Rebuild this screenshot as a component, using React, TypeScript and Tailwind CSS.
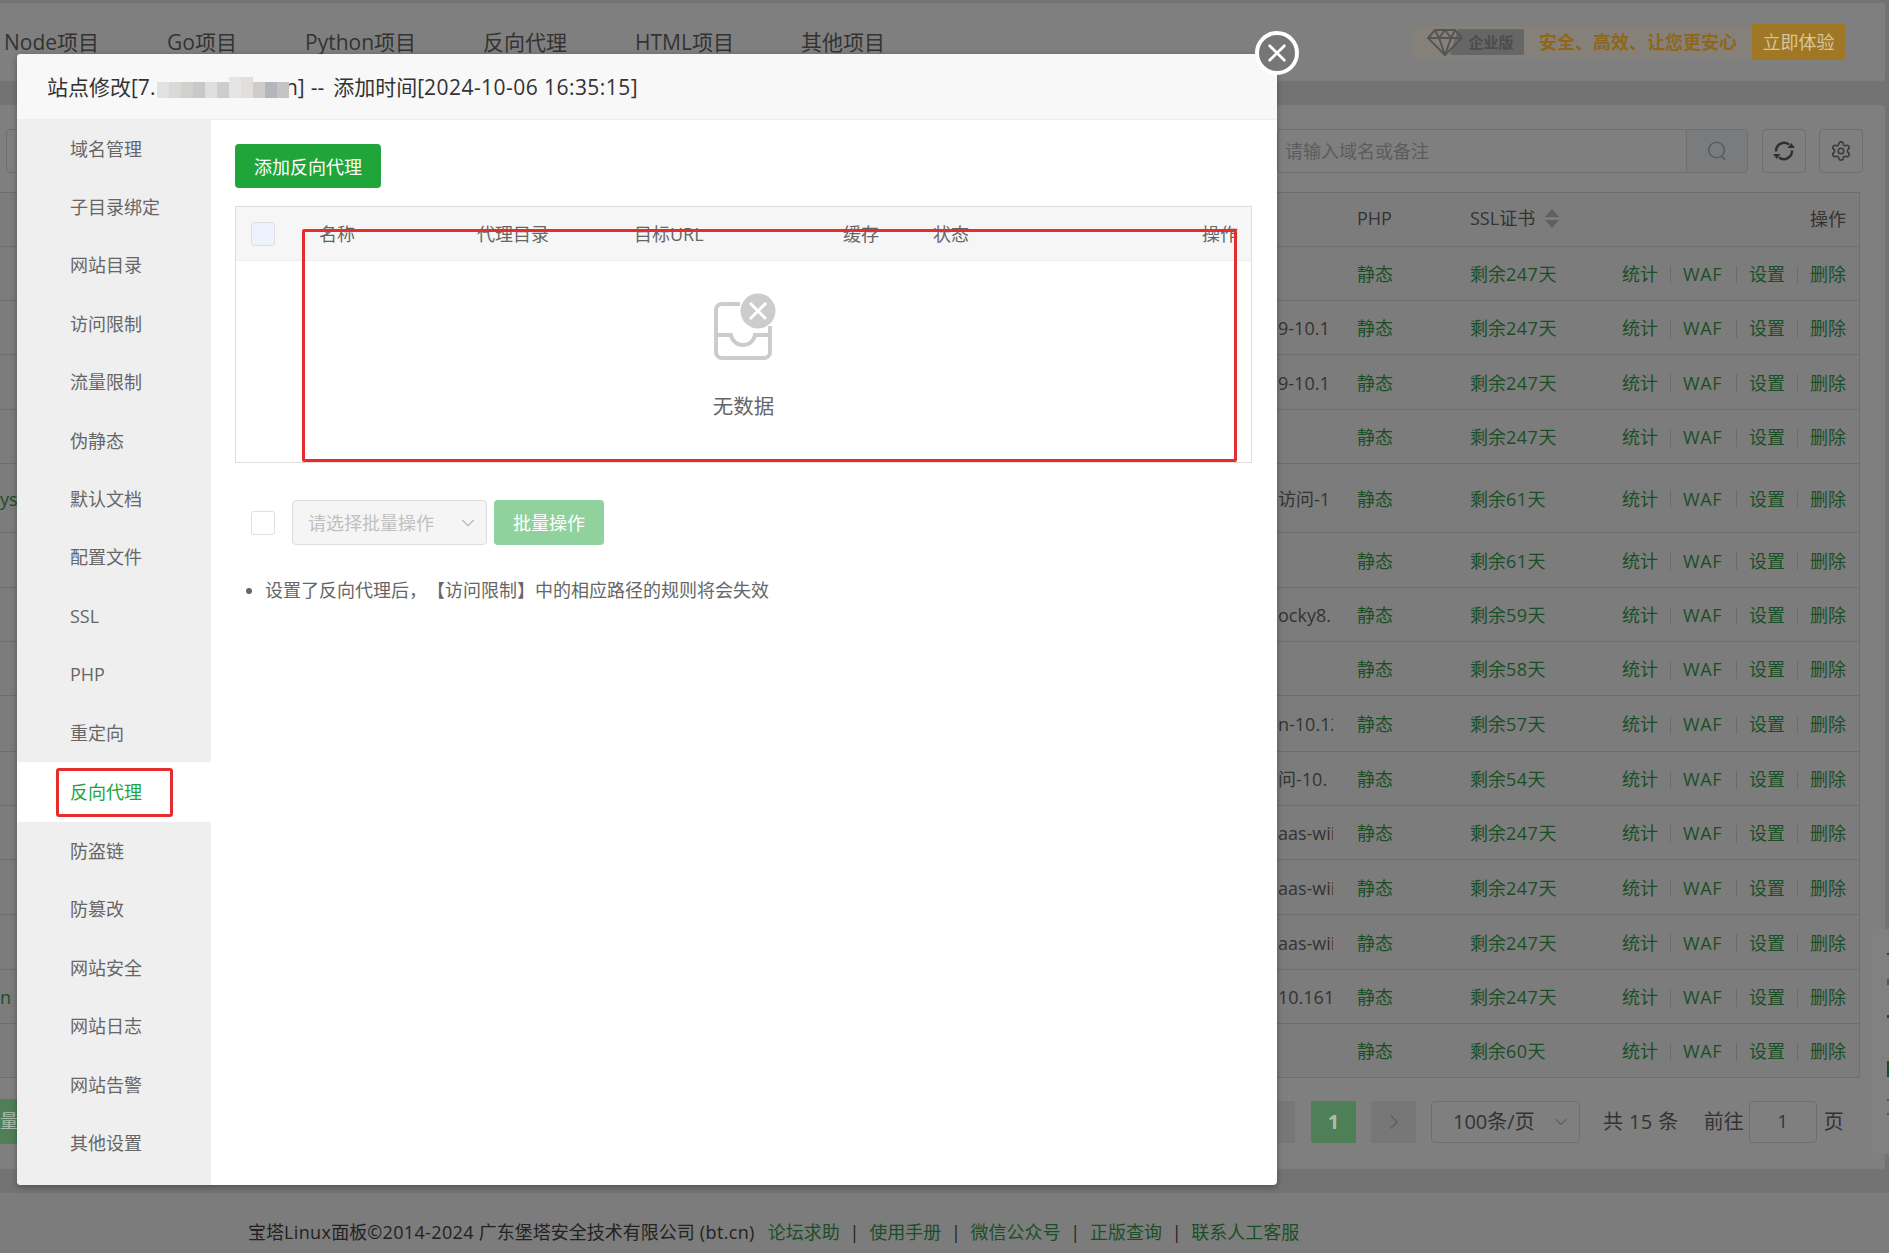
import { ChevronDown, ChevronRight, Settings } from "lucide-react";

const fontStack = "font-['Open_Sans','Noto_Sans_CJK_SC',sans-serif] [text-spacing-trim:space-all]";

const navItems = [
  { label: "Node项目", width: "w-[163px]" },
  { label: "Go项目", width: "w-[138px]" },
  { label: "Python项目", width: "w-[178px]" },
  { label: "反向代理", width: "w-[152px]" },
  { label: "HTML项目", width: "w-[166px]" },
  { label: "其他项目", width: "w-[100px]" },
];

const menu = [
  "域名管理", "子目录绑定", "网站目录", "访问限制", "流量限制", "伪静态", "默认文档", "配置文件", "SSL",
  "PHP", "重定向", "反向代理", "防盗链", "防篡改", "网站安全", "网站日志", "网站告警", "其他设置",
];

const rows = [
  { h: "h-[54px]", left: "", ver: "", days: 247 },
  { h: "h-[54px]", left: "", ver: "9-10.1", days: 247 },
  { h: "h-[55px]", left: "", ver: "9-10.1", days: 247 },
  { h: "h-[54px]", left: "", ver: "", days: 247 },
  { h: "h-[69px]", left: "ys.", ver: "访问-1", days: 61 },
  { h: "h-[55px]", left: "", ver: "", days: 61 },
  { h: "h-[54px]", left: "", ver: "ocky8.", days: 59 },
  { h: "h-[54px]", left: "", ver: "", days: 58 },
  { h: "h-[56px]", left: "", ver: "n-10.12", days: 57 },
  { h: "h-[54px]", left: "", ver: "问-10.", days: 54 },
  { h: "h-[54px]", left: "", ver: "aas-wii", days: 247 },
  { h: "h-[55px]", left: "", ver: "aas-wii", days: 247 },
  { h: "h-[55px]", left: "", ver: "aas-wii", days: 247 },
  { h: "h-[54px]", left: "n", ver: "10.161", days: 247 },
  { h: "h-[54px]", left: "", ver: "", days: 60 },
];

const mosaic = [
  { c: "bg-[#e2e2e2]", h: "h-[16px]" },
  { c: "bg-[#d9d9d9]", h: "h-[16px]" },
  { c: "bg-[#d3d1ce]", h: "h-[16px]" },
  { c: "bg-[#c8c8c8]", h: "h-[16px]" },
  { c: "bg-[#dedede]", h: "h-[16px]" },
  { c: "bg-[#cdcdcd]", h: "h-[16px]" },
  { c: "bg-[#e4e4e4]", h: "h-[21px]" },
  { c: "bg-[#e0dfdd]", h: "h-[21px]" },
  { c: "bg-[#d0cdc9]", h: "h-[16px]" },
  { c: "bg-[#b4b6bb]", h: "h-[16px]" },
  { c: "bg-[#c4c4c4]", h: "h-[16px]" },
];

const RowActions = () => (
  <div className="flex items-center text-[18px] text-[#1a4f26]">
    <div className="flex w-[61px] items-center justify-between pr-[12px]">
      <span>统计</span>
      <span className="h-[18px] w-px bg-[#6b6b6b]" />
    </div>
    <div className="flex w-[66px] items-center justify-between pr-[12px]">
      <span className="tracking-[0.6px]">WAF</span>
      <span className="h-[18px] w-px bg-[#6b6b6b]" />
    </div>
    <div className="flex w-[61px] items-center justify-between pr-[12px]">
      <span>设置</span>
      <span className="h-[18px] w-px bg-[#6b6b6b]" />
    </div>
    <span>删除</span>
  </div>
);

const BackgroundPage = () => (
  <div className="h-full bg-[#737373] pt-[3px]">
    <div className="mr-[4px] flex h-[78px] items-center rounded-r-[3px] bg-[#7f7f7f] pl-[4px] pr-[40px]">
      {navItems.map((item) => (
        <span key={item.label} className={`${item.width} pt-[2px] text-[21px] text-[#333333]`}>
          {item.label}
        </span>
      ))}
      <div className="ml-auto flex h-[36px] items-center">
        <div className="flex h-[32px] w-[338px] items-center rounded-l-[4px] bg-[#85817a]">
          <svg viewBox="0 0 36 28" className="relative z-10 ml-[13px] h-[28px] w-[36px]" fill="none" stroke="#555555" strokeWidth="2" strokeLinejoin="round">
            <path d="M8 2H28L35 10L18 27L1 10Z" />
            <path d="M1 10H35M12 10L18 27L24 10M8 2L12 10L18 2L24 10L28 2" />
          </svg>
          <span className="-ml-[13px] flex h-[26px] w-[74px] items-center justify-center rounded-r-[2px] bg-[#666666] pl-[8px] text-[15px] font-bold text-[#4c4c4c] [clip-path:polygon(8px_0,100%_0,100%_100%,0_100%)]">
            企业版
          </span>
          <span className="ml-[15px] whitespace-nowrap text-[18px] font-bold text-[#8f6719]">
            安全、高效、让您更安心
          </span>
        </div>
        <span className="flex h-[36px] w-[93px] items-center justify-center rounded-[2px] bg-[#a07724] text-[18px] text-[#d8c49a]">
          立即体验
        </span>
      </div>
    </div>

    <div className="mr-[4px] mt-[24px] h-[1064px] rounded-r-[3px] bg-[#7f7f7f] pt-[24px]">
      <div className="flex h-[44px] items-center pl-[6px]">
        <div className="h-full w-[30px] rounded-l-[4px] border border-[#6d6d6d]" />
        <div className="ml-[1241px] flex h-full w-[471px] items-center rounded-[4px] border border-[#6e6e6e]">
          <span className="flex-1 pl-[7px] pt-[1px] text-[18px] text-[#5c5c5c]">请输入域名或备注</span>
          <div className="flex h-full w-[61px] items-center justify-center rounded-r-[4px] border-l border-[#6e6e6e] bg-[#7a7b7d]">
            <svg viewBox="0 0 24 24" className="size-[22px]" fill="none" stroke="#5a5a5a" strokeWidth="1.6" strokeLinecap="round">
              <circle cx="11.5" cy="11" r="8.5" />
              <path d="M17.5 18L20 21" />
            </svg>
          </div>
        </div>
        <div className="ml-[14px] flex size-[44px] items-center justify-center rounded-[4px] border border-[#6e6e6e]">
          <svg viewBox="0 0 24 24" className="size-[24px]" fill="none" stroke="#2f2f2f" strokeWidth="2.4">
            <path d="M4 12.5A8.2 8.2 0 0 1 17 5.5" />
            <path d="M20 11.5A8.2 8.2 0 0 1 7 18.5" />
            <path d="M15.5 9H23L19.2 4Z" fill="#2f2f2f" stroke="none" />
            <path d="M8.5 15H1L4.8 20Z" fill="#2f2f2f" stroke="none" />
          </svg>
        </div>
        <div className="ml-[13px] flex size-[44px] items-center justify-center rounded-[4px] border border-[#6e6e6e]">
          <Settings className="size-[22px] text-[#3a3a3a]" strokeWidth={1.7} />
        </div>
      </div>

      <div className="mt-[19px] w-[1860px] border-r border-[#6e6e6e] bg-[#7c7c7c]">
        <div className="grid h-[55px] grid-cols-[1278px_79px_113px_1fr_auto] items-center border-y border-[#6e6e6e] pb-[2px] pr-[13px] text-[18px] text-[#333333]">
          <span />
          <span />
          <span>PHP</span>
          <div className="flex items-center gap-[10px]">
            <span>SSL证书</span>
            <div className="flex flex-col gap-[3px]">
              <span className="h-0 w-0 border-x-[7px] border-b-[8px] border-x-transparent border-b-[#5f5f5f]" />
              <span className="h-0 w-0 border-x-[7px] border-t-[8px] border-x-transparent border-t-[#5f5f5f]" />
            </div>
          </div>
          <span className="pt-[2px]">操作</span>
        </div>
        {rows.map((row, i) => (
          <div
            key={i}
            className={`${row.h} grid grid-cols-[1278px_79px_113px_152px_1fr] items-center border-b border-[#6e6e6e] pt-[2px] text-[18px]`}
          >
            <span className="overflow-hidden text-[#1a4f26]">{row.left}</span>
            <span className="w-[55px] overflow-hidden whitespace-nowrap text-[#333333]">{row.ver}</span>
            <span className="text-[#1a4f26]">静态</span>
            <span className="text-[#1a4f26]">
              剩余<span className="tracking-[0.5px]">{row.days}</span>天
            </span>
            <RowActions />
          </div>
        ))}
      </div>

      <div className="mt-[21px] flex h-[45px] items-center text-[#333333]">
        <div className="flex h-full w-[40px] items-center overflow-hidden bg-[#4f7f57] text-[18px] whitespace-nowrap text-[#a9bfae]">
          <span className="-ml-[18px]">批量操作</span>
        </div>
        <div className="ml-[1237px] h-[42px] w-[18px] bg-[#777777]" />
        <div className="ml-[16px] flex h-[42px] w-[45px] items-center justify-center rounded-[2px] bg-[#4f7f57] text-[20px] font-bold text-[#a9bfae]">
          1
        </div>
        <div className="ml-[15px] flex h-[42px] w-[45px] items-center justify-center rounded-[2px] bg-[#777777]">
          <ChevronRight className="size-[24px] text-[#5f5f5f]" strokeWidth={1.6} />
        </div>
        <div className="ml-[15px] flex h-[42px] w-[149px] items-center justify-between rounded-[4px] border border-[#6e6e6e] pl-[21px] pr-[8px] text-[20px]">
          <span>100条/页</span>
          <ChevronDown className="size-[20px] text-[#5f5f5f]" strokeWidth={1.3} />
        </div>
        <span className="ml-[23px] whitespace-nowrap text-[20px] tracking-[0.4px]">共 15 条</span>
        <span className="ml-[25px] text-[20px]">前往</span>
        <div className="ml-[5px] flex h-[42px] w-[68px] items-center justify-center rounded-[4px] border border-[#6e6e6e] text-[18px]">
          1
        </div>
        <span className="ml-[7px] text-[20px]">页</span>
      </div>
    </div>

    <div className="mt-[24px] flex h-[60px] items-center whitespace-pre bg-[#7c7c7c] pl-[248px] pt-[18px] text-[18px] text-[#222222]">
      <span>宝塔</span>
      <span className="tracking-[0.35px]">Linux</span>
      <span>面板</span>
      <span className="tracking-[0.35px]">©2014-2024 </span>
      <span>广东堡塔安全技术有限公司</span>
      <span className="tracking-[0.35px]"> (bt.cn)</span>
      <div className="ml-[13px] flex items-center gap-[9.75px]">
        <span className="text-[#1a4f26]">论坛求助</span>
        <span>|</span>
        <span className="text-[#1a4f26]">使用手册</span>
        <span>|</span>
        <span className="text-[#1a4f26]">微信公众号</span>
        <span>|</span>
        <span className="text-[#1a4f26]">正版查询</span>
        <span>|</span>
        <span className="text-[#1a4f26]">联系人工客服</span>
      </div>
    </div>
  </div>
);

const SideDock = () => (
  <div className="absolute left-[1871px] top-[929px] h-[225px] w-[18px] rounded-l-[6px] bg-[#818181]">
    <span className="absolute left-[16px] top-[24px] size-[2px] bg-[#1a4f26]" />
    <span className="absolute left-[16px] top-[50px] h-[6px] w-[2px] bg-[#555555]" />
    <span className="absolute left-[16px] top-[86px] h-[3px] w-[2px] bg-[#1a4f26]" />
    <span className="absolute left-[16px] top-[132px] h-[16px] w-[2px] bg-[#1a4f26]" />
    <span className="absolute left-[16px] top-[170px] h-[2px] w-[2px] bg-[#555555]" />
    <span className="absolute left-[16px] top-[184px] h-[2px] w-[2px] bg-[#555555]" />
  </div>
);

const EmptyIcon = () => (
  <svg viewBox="0 0 58 58" className="-ml-[2px] h-[58px] w-[58px] overflow-visible" fill="none">
    <path
      d="M26 2H8A6 6 0 0 0 2 8V50A6 6 0 0 0 8 56H50A6 6 0 0 0 56 50V24M2 33H17C18 39 23 43 29 43C35 43 40 39 41 33H56"
      stroke="#cccccc"
      strokeWidth="4"
    />
    <circle cx="44" cy="9" r="17.5" fill="#cccccc" />
    <path d="M36 1L52 17M52 1L36 17" stroke="#ffffff" strokeWidth="3" />
  </svg>
);

const Modal = () => (
  <div className="absolute left-[17px] top-[54px] flex h-[1131px] w-[1260px] flex-col rounded-[4px] bg-white shadow-[0_2px_6px_rgba(0,0,0,0.3)]">
    <div className="flex h-[66px] shrink-0 items-center whitespace-pre rounded-t-[4px] border-b border-[#eeeeee] bg-[#f8f8f8] pl-[30px] pt-[2px] text-[21px] text-[#333333]">
      <span>站点修改[7.</span>
      <span className="relative z-10 ml-[1.5px] flex h-[21px] items-end">
        {mosaic.map((m, i) => (
          <span key={i} className={`${m.c} ${m.h} w-[12px]`} />
        ))}
      </span>
      <span className="-ml-[4px]">n]</span>
      <span className="ml-[6px] mr-[9px]">--</span>
      <span>添加时间[</span>
      <span className="tracking-[0.45px]">2024-10-06 16:35:15</span>
      <span>]</span>
    </div>

    <button className="absolute -right-[22px] -top-[23px] flex size-[44px] items-center justify-center rounded-full border-[4px] border-white bg-[#767676]">
      <svg viewBox="0 0 24 24" className="size-[22px]" fill="none" stroke="#ffffff" strokeWidth="3" strokeLinecap="round">
        <path d="M4 4L20 20M20 4L4 20" />
      </svg>
    </button>

    <div className="flex min-h-0 flex-1">
      <div className="w-[194px] shrink-0 overflow-hidden rounded-bl-[4px] bg-[#efefef]">
        {menu.map((name) =>
          name === "反向代理" ? (
            <div key={name} className="relative flex h-[60px] items-center bg-white pl-[53px] text-[18px] text-[#20a53a]">
              {name}
              <span className="absolute left-[39px] top-[6px] h-[49px] w-[117px] rounded-[3px] border-[3px] border-[#e62c2c]" />
            </div>
          ) : (
            <div key={name} className="flex h-[58.4px] items-center pl-[53px] text-[18px] text-[#666666]">
              {name}
            </div>
          ),
        )}
      </div>

      <div className="flex-1 pl-[24px] pr-[25px] pt-[24px] text-[18px]">
        <button className="flex h-[44px] w-[146px] items-center justify-center rounded-[4px] bg-[#20a53a] pt-[2px] text-white">
          添加反向代理
        </button>

        <div className="relative mt-[18px] h-[257px] border border-[#dddddd]">
          <div className="grid h-[54px] grid-cols-[83px_158px_157px_209px_90px_269px_1fr] items-center border-b border-[#eeeeee] bg-[#f6f6f6] text-[#666666]">
            <span className="ml-[15px] block size-[24px] rounded-[3px] border border-[#dcdfe6] bg-[#edf2fc]" />
            <span className="pt-[2px]">名称</span>
            <span className="pt-[2px]">代理目录</span>
            <span className="pt-[2px]">目标URL</span>
            <span className="pt-[2px]">缓存</span>
            <span className="pt-[2px]">状态</span>
            <span className="pt-[2px]">操作</span>
          </div>
          <div className="flex flex-col items-center pt-[41px]">
            <EmptyIcon />
            <span className="mt-[31px] text-[20.5px] text-[#666666]">无数据</span>
          </div>
          <span className="absolute left-[66px] top-[22px] h-[233px] w-[935px] rounded-[2px] border-[3px] border-[#e62c2c]" />
        </div>

        <div className="mt-[37px] flex h-[45px] items-center">
          <span className="ml-[16px] block size-[24px] rounded-[3px] border border-[#dcdfe6] bg-white" />
          <div className="ml-[17px] flex h-full w-[195px] items-center justify-between rounded-[4px] border border-[#dddddd] bg-[#f5f5f5] pl-[15px] pr-[7px] text-[#c0c0c0]">
            <span className="pt-[2px]">请选择批量操作</span>
            <ChevronDown className="size-[22px] text-[#b5b5b5]" strokeWidth={1.2} />
          </div>
          <button className="ml-[7px] h-full w-[110px] rounded-[4px] bg-[#90d29d] pt-[2px] text-white">批量操作</button>
        </div>

        <ul className="mt-[32px] list-none text-[#666666]">
          <li className="flex items-center">
            <span className="ml-[11px] size-[6px] rounded-full bg-[#666666]" />
            <span className="ml-[13px]">设置了反向代理后，【访问限制】中的相应路径的规则将会失效</span>
          </li>
        </ul>
      </div>
    </div>
  </div>
);

export default function App() {
  return (
    <div className={`relative h-[1253px] w-[1889px] overflow-hidden ${fontStack}`}>
      <BackgroundPage />
      <SideDock />
      <Modal />
    </div>
  );
}
